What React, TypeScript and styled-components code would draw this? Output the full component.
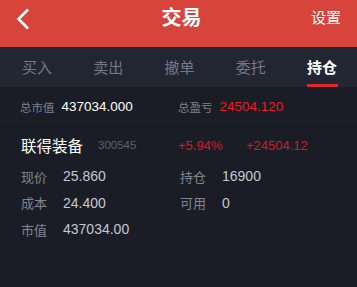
import styled, { createGlobalStyle } from "styled-components";

const GlobalStyle = createGlobalStyle`
  html, body {
    margin: 0;
    padding: 0;
    background: #1b1d26;
  }
  body {
    font-family: "Liberation Sans", "Noto Sans CJK SC", sans-serif;
  }
`;

const Page = styled.div`
  width: 357px;
  height: 287px;
  background: #1b1d26;
  overflow: hidden;
`;

const Header = styled.div`
  height: 47px;
  background: #d6443b;
  display: grid;
  grid-template-columns: 60px 1fr 60px;
  align-items: center;
  color: #fff;
`;

const Back = styled.div`
  padding-left: 15px;
  padding-top: 2px;
  margin-top: -12px;
  display: flex;
  align-items: center;
`;

const Title = styled.div`
  text-align: center;
  font-size: 20px;
  font-weight: bold;
  font-family: "Noto Sans CJK SC", sans-serif;
  padding-left: 6px;
  margin-top: -14px;
`;

const Settings = styled.div`
  font-size: 15px;
  font-family: "Noto Sans CJK SC", sans-serif;
  text-align: right;
  padding-right: 16px;
  margin-top: -14px;
`;

const Tabs = styled.div`
  height: 40px;
  background: #222633;
  display: flex;
  padding: 0 6px 0 8px;
  justify-content: space-between;
`;

const Tab = styled.div<{ $active?: boolean }>`
  position: relative;
  width: 58px;
  display: flex;
  align-items: center;
  justify-content: center;
  padding-bottom: 2px;
  font-size: 15px;
  font-family: "Noto Sans CJK SC", sans-serif;
  color: ${(p) => (p.$active ? "#ffffff" : "#737985")};
  font-weight: ${(p) => (p.$active ? "bold" : "normal")};

  &::after {
    content: "";
    display: ${(p) => (p.$active ? "block" : "none")};
    position: absolute;
    left: 14px;
    right: 13px;
    bottom: 0;
    height: 3px;
    background: #e2272b;
  }
`;

const Summary = styled.div`
  display: flex;
  align-items: center;
  height: 39px;
  padding-left: 20px;
  border-bottom: 1px solid #191b23;
`;

const SumCell = styled.div`
  display: flex;
  align-items: center;
  width: 158px;
  gap: 7px;
`;

const SumLabel = styled.span`
  font-size: 11.5px;
  color: #7d828e;
  font-family: "Noto Sans CJK SC", sans-serif;
`;

const SumValue = styled.span<{ $red?: boolean }>`
  font-size: 13.5px;
  color: ${(p) => (p.$red ? "#ec1c24" : "#ffffff")};
`;

const StockRow = styled.div`
  display: flex;
  align-items: center;
  height: 36px;
  padding-left: 21px;
`;

const StockName = styled.div`
  width: 77px;
  font-size: 15.5px;
  color: #ffffff;
  font-family: "Noto Sans CJK SC", sans-serif;
`;

const StockCode = styled.div`
  width: 80px;
  font-size: 11.5px;
  color: #5c616d;
`;

const Change = styled.div<{ $w?: number }>`
  width: ${(p) => p.$w ?? 68}px;
  font-size: 13px;
  color: #d31b22;
`;

const Details = styled.div`
  display: grid;
  grid-template-columns: 159px 1fr;
  grid-auto-rows: 26.5px;
  padding: 0 0 0 21px;
`;

const Detail = styled.div`
  display: flex;
  align-items: center;
`;

const DLabel = styled.span`
  width: 42px;
  font-size: 13px;
  color: #80858f;
  font-family: "Noto Sans CJK SC", sans-serif;
`;

const DValue = styled.span`
  font-size: 14px;
  color: #c2c8d4;
`;

const tabs = ["买入", "卖出", "撤单", "委托", "持仓"];

export default function App() {
  return (
    <Page>
      <GlobalStyle />
      <Header>
        <Back>
          <svg width="16" height="22" viewBox="0 0 16 22">
            <polyline
              points="13,1.5 3.5,11 13,20.5"
              fill="none"
              stroke="#fff"
              strokeWidth="2.6"
            />
          </svg>
        </Back>
        <Title>交易</Title>
        <Settings>设置</Settings>
      </Header>
      <Tabs>
        {tabs.map((t, i) => (
          <Tab key={t} $active={i === tabs.length - 1}>
            {t}
          </Tab>
        ))}
      </Tabs>
      <Summary>
        <SumCell>
          <SumLabel>总市值</SumLabel>
          <SumValue>437034.000</SumValue>
        </SumCell>
        <SumCell>
          <SumLabel>总盈亏</SumLabel>
          <SumValue $red>24504.120</SumValue>
        </SumCell>
      </Summary>
      <StockRow>
        <StockName>联得装备</StockName>
        <StockCode>300545</StockCode>
        <Change>+5.94%</Change>
        <Change $w={90}>+24504.12</Change>
      </StockRow>
      <Details>
        <Detail>
          <DLabel>现价</DLabel>
          <DValue>25.860</DValue>
        </Detail>
        <Detail>
          <DLabel>持仓</DLabel>
          <DValue>16900</DValue>
        </Detail>
        <Detail>
          <DLabel>成本</DLabel>
          <DValue>24.400</DValue>
        </Detail>
        <Detail>
          <DLabel>可用</DLabel>
          <DValue>0</DValue>
        </Detail>
        <Detail>
          <DLabel>市值</DLabel>
          <DValue>437034.00</DValue>
        </Detail>
      </Details>
    </Page>
  );
}
